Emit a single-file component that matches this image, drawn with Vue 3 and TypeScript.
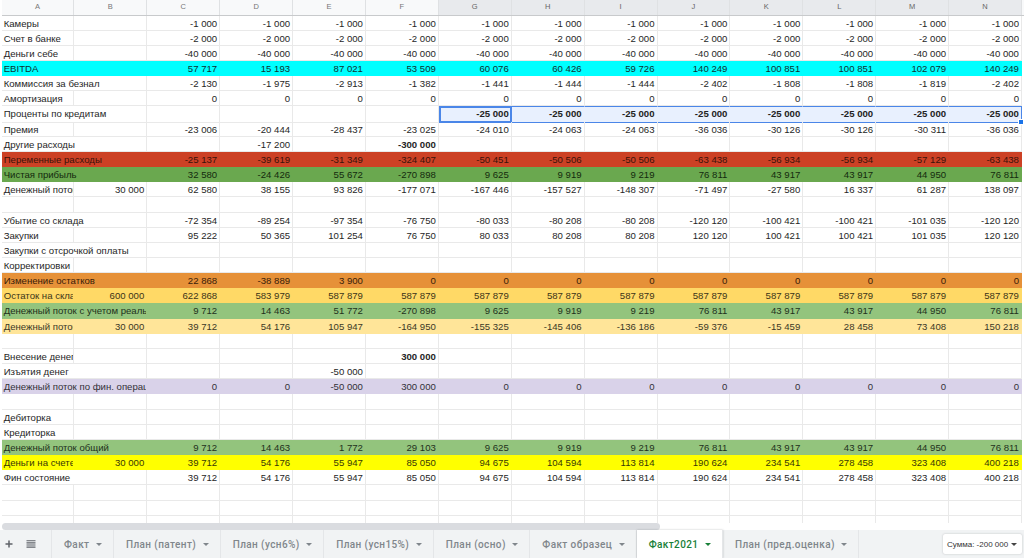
<script setup lang="ts">
type Row = { a: string; b?: string; v?: string[]; tone?: string; bold?: boolean; span?: boolean; sel?: boolean };
const letters = ['A','B','C','D','E','F','G','H','I','J','K','L','M','N'];
const same = (s: string) => Array(12).fill(s);
const zeros = (...first: string[]) => [...first, ...Array(12 - first.length).fill('0')];
const fin = ['39 712','54 176','55 947','85 050','94 675','104 594','113 814','190 624','234 541','278 458','323 408','400 218'];
const rows: Row[] = [
  { a: 'Камеры', v: same('-1 000') },
  { a: 'Счет в банке', v: same('-2 000') },
  { a: 'Деньги себе', v: same('-40 000') },
  { a: 'EBITDA', tone: 'cyan', v: ['57 717','15 193','87 021','53 509','60 076','60 426','59 726','140 249','100 851','100 851','102 079','140 249'] },
  { a: 'Коммиссия за безнал', span: true, v: ['-2 130','-1 975','-2 913','-1 382','-1 441','-1 444','-1 444','-2 402','-1 808','-1 808','-1 819','-2 402'] },
  { a: 'Амортизация', v: same('0') },
  { a: 'Проценты по кредитам', span: true, sel: true, v: ['','','','',...Array(8).fill('-25 000')] },
  { a: 'Премия', v: ['-23 006','-20 444','-28 437','-23 025','-24 010','-24 063','-24 063','-36 036','-30 126','-30 126','-30 311','-36 036'] },
  { a: 'Другие расходы', span: true, v: ['','-17 200','','*-300 000'] },
  { a: 'Переменные расходы', span: true, tone: 'red', v: ['-25 137','-39 619','-31 349','-324 407','-50 451','-50 506','-50 506','-63 438','-56 934','-56 934','-57 129','-63 438'] },
  { a: 'Чистая прибыль', span: true, tone: 'green', v: ['32 580','-24 426','55 672','-270 898','9 625','9 919','9 219','76 811','43 917','43 917','44 950','76 811'] },
  { a: 'Денежный поток', b: '30 000', v: ['62 580','38 155','93 826','-177 071','-167 446','-157 527','-148 307','-71 497','-27 580','16 337','61 287','138 097'] },
  { a: '' },
  { a: 'Убытие со склада', span: true, v: ['-72 354','-89 254','-97 354','-76 750','-80 033','-80 208','-80 208','-120 120','-100 421','-100 421','-101 035','-120 120'] },
  { a: 'Закупки', v: ['95 222','50 365','101 254','76 750','80 033','80 208','80 208','120 120','100 421','100 421','101 035','120 120'] },
  { a: 'Закупки с отсрочкой оплаты', span: true },
  { a: 'Корректировки' },
  { a: 'Изменение остатков', span: true, tone: 'orange', v: zeros('22 868','-38 889','3 900') },
  { a: 'Остаток на складе', b: '600 000', tone: 'amber', v: ['622 868','583 979',...Array(10).fill('587 879')] },
  { a: 'Денежный поток с учетом реальных', span: true, tone: 'sage', v: ['9 712','14 463','51 772','-270 898','9 625','9 919','9 219','76 811','43 917','43 917','44 950','76 811'] },
  { a: 'Денежный поток', b: '30 000', tone: 'cream', v: ['39 712','54 176','105 947','-164 950','-155 325','-145 406','-136 186','-59 376','-15 459','28 458','73 408','150 218'] },
  { a: '' },
  { a: 'Внесение денег', v: ['','','','*300 000'] },
  { a: 'Изъятия денег', span: true, v: ['','','-50 000'] },
  { a: 'Денежный поток по фин. операциям', span: true, tone: 'lilac', v: ['0','0','-50 000','300 000',...Array(8).fill('0')] },
  { a: '' },
  { a: 'Дебиторка' },
  { a: 'Кредиторка' },
  { a: 'Денежный поток общий', span: true, tone: 'sage', v: ['9 712','14 463','1 772','29 103','9 625','9 919','9 219','76 811','43 917','43 917','44 950','76 811'] },
  { a: 'Деньги на счете', b: '30 000', tone: 'yellow', v: fin },
  { a: 'Фин состояние', span: true, v: fin },
  { a: '' },
  { a: '' },
  { a: '' },
];
const cell = (r: Row, i: number) => (r.v?.[i] ?? '').replace('*', '');
const isBold = (r: Row, i: number) => r.sel || (r.v?.[i] ?? '').startsWith('*');
const tabs = ['Факт','План (патент)','План (усн6%)','План (усн15%)','План (осно)','Факт образец','Факт2021','План (пред.оценка)'];
</script>

<template>
  <div class="app">
    <div class="sheet">
      <div class="head">
        <div v-for="(l, i) in letters" :key="l" class="hcell" :class="{ active: i >= 6 }">{{ l }}</div>
      </div>
      <div class="body">
        <div v-for="(r, n) in rows" :key="n" class="row" :class="r.tone">
          <div class="cell label" :class="{ wide: r.span }">{{ r.a }}</div>
          <div v-if="!r.span" class="cell num">{{ r.b }}</div>
          <div
            v-for="i in 12"
            :key="i"
            class="cell num"
            :class="{ bold: isBold(r, i - 1), sel: r.sel && i >= 5, first: r.sel && i === 5, last: r.sel && i === 12 }"
          >{{ cell(r, i - 1) }}</div>
        </div>
      </div>
    </div>
    <div class="scroll"><div class="thumb"></div></div>
    <div class="tabbar">
      <div class="tools">
        <svg width="10" height="10" viewBox="0 0 10 10"><path d="M5 1.5v7M1.5 5h7" stroke="#5f6368" stroke-width="1.5" fill="none"/></svg>
        <svg width="10" height="9" viewBox="0 0 10 9"><path d="M.5 .75h9M.5 2.9h9M.5 5h9M.5 7.2h9" stroke="#5f6368" stroke-width="1.2" fill="none"/></svg>
      </div>
      <div v-for="t in tabs" :key="t" class="tab" :class="{ on: t === 'Факт2021' }">
        <span>{{ t }}</span><i class="arrow"></i>
      </div>
      <div class="sum"><span>Сумма: -200 000</span><i class="arrow dark"></i></div>
    </div>
  </div>
</template>

<style>
html, body { margin: 0; padding: 0; background: #fff; }
</style>

<style scoped>
.app {
  width: 1024px;
  height: 558px;
  overflow: hidden;
  display: flex;
  flex-direction: column;
  font-family: "Liberation Sans", Arial, sans-serif;
  background: #fff;
}
.sheet { height: 523px; overflow: hidden; padding-left: 1.5px; flex: none; }
.head, .row {
  display: grid;
  grid-template-columns: repeat(14, 72.9px);
}
.head { height: 15.5px; background: #f8f9fa; border-bottom: 1px solid #c8cacc; box-sizing: border-box; }
.hcell {
  font-size: 7.5px;
  color: #777;
  text-align: center;
  line-height: 14px;
  border-right: 1px solid #dfe1e3;
  box-sizing: border-box;
}
.hcell.active { background: #e8eaed; color: #666; }
.row { height: 15.17px; }
.cell {
  box-sizing: border-box;
  border-right: 1px solid #e9e9e9;
  border-bottom: 1px solid #e9e9e9;
  font-size: 9.6px;
  line-height: 16px;
  padding: 0 2px;
  color: #262626;
  overflow: hidden;
  white-space: nowrap;
}
.label { padding-left: 2.2px; }
.wide { grid-column: span 2; }
.num { text-align: right; }
.bold { font-weight: 700; }
.sel { background: #e8f0fe; border-top: 1px solid #4a86e8; border-bottom: 1px solid #4a86e8; border-right-color: transparent; line-height: 14.4px; color: #222; }
.first { border: 2px solid #4a86e8; line-height: 12.4px; padding-right: 1px; }
.last { border-right: 1px solid #4a86e8; position: relative; overflow: visible; }
.last::after {
  content: '';
  position: absolute;
  right: -3px;
  bottom: -3px;
  width: 4px;
  height: 4px;
  background: #1a73e8;
  border: 0.5px solid #fff;
}
.cyan .cell { background: #00ffff; border-color: #00ffff; color: #0f3030; }
.red .cell { background: #cc4125; border-color: #cc4125; color: #3a120a; }
.green .cell { background: #6aa84f; border-color: #6aa84f; color: #142a0e; }
.orange .cell { background: #e69138; border-color: #e69138; color: #38200a; }
.amber .cell { background: #ffd966; border-color: #ffd966; color: #3c3418; }
.sage .cell { background: #93c47d; border-color: #93c47d; color: #22301c; }
.cream .cell { background: #ffe599; border-color: #ffe599; color: #3c3826; }
.lilac .cell { background: #d9d2e9; border-color: #d9d2e9; color: #333138; }
.yellow .cell { background: #ffff00; border-color: #ffff00; color: #383806; }
.scroll { height: 7px; padding: 0 0 0 2px; background: #fff; flex: none; }
.thumb { width: 658px; height: 7px; background: #dadce0; border-radius: 4px; }
.tabbar {
  flex: 1;
  display: flex;
  align-items: stretch;
  background: #f1f3f4;
  font-family: Roboto, "Liberation Sans", sans-serif;
  font-weight: 500;
  font-size: 10px;
  letter-spacing: 0.4px;
  color: #80868b;
}
.tools {
  width: 52px;
  flex: none;
  display: flex;
  align-items: center;
  gap: 12.5px;
  padding-left: 3.7px;
  box-sizing: border-box;
  border-right: 1px solid #e4e6e8;
}
.tab {
  display: flex;
  align-items: center;
  gap: 6.5px;
  padding: 0 11px 0 12px;
  border-right: 1px solid #e4e6e8;
  white-space: nowrap;
}
.tab.on { background: #fff; color: #188038; box-shadow: 0 0 2px rgba(60,64,67,.3); }
.tab.on .arrow { border-top-color: #188038; }
.arrow {
  display: inline-block;
  width: 0;
  height: 0;
  border-left: 3px solid transparent;
  border-right: 3px solid transparent;
  border-top: 3px solid #80868b;
}
.arrow.dark { border-top-color: #444; }
.sum {
  margin: 4px 2px 4px auto;
  padding: 0 5px 0 4px;
  width: 79px;
  box-sizing: border-box;
  display: flex;
  align-items: center;
  justify-content: space-between;
  background: #fff;
  border-radius: 2px;
  box-shadow: 0 0 2px rgba(60,64,67,.3);
  font-family: "Liberation Sans", sans-serif;
  font-weight: 400;
  font-size: 8px;
  letter-spacing: 0;
  color: #333;
}
</style>
